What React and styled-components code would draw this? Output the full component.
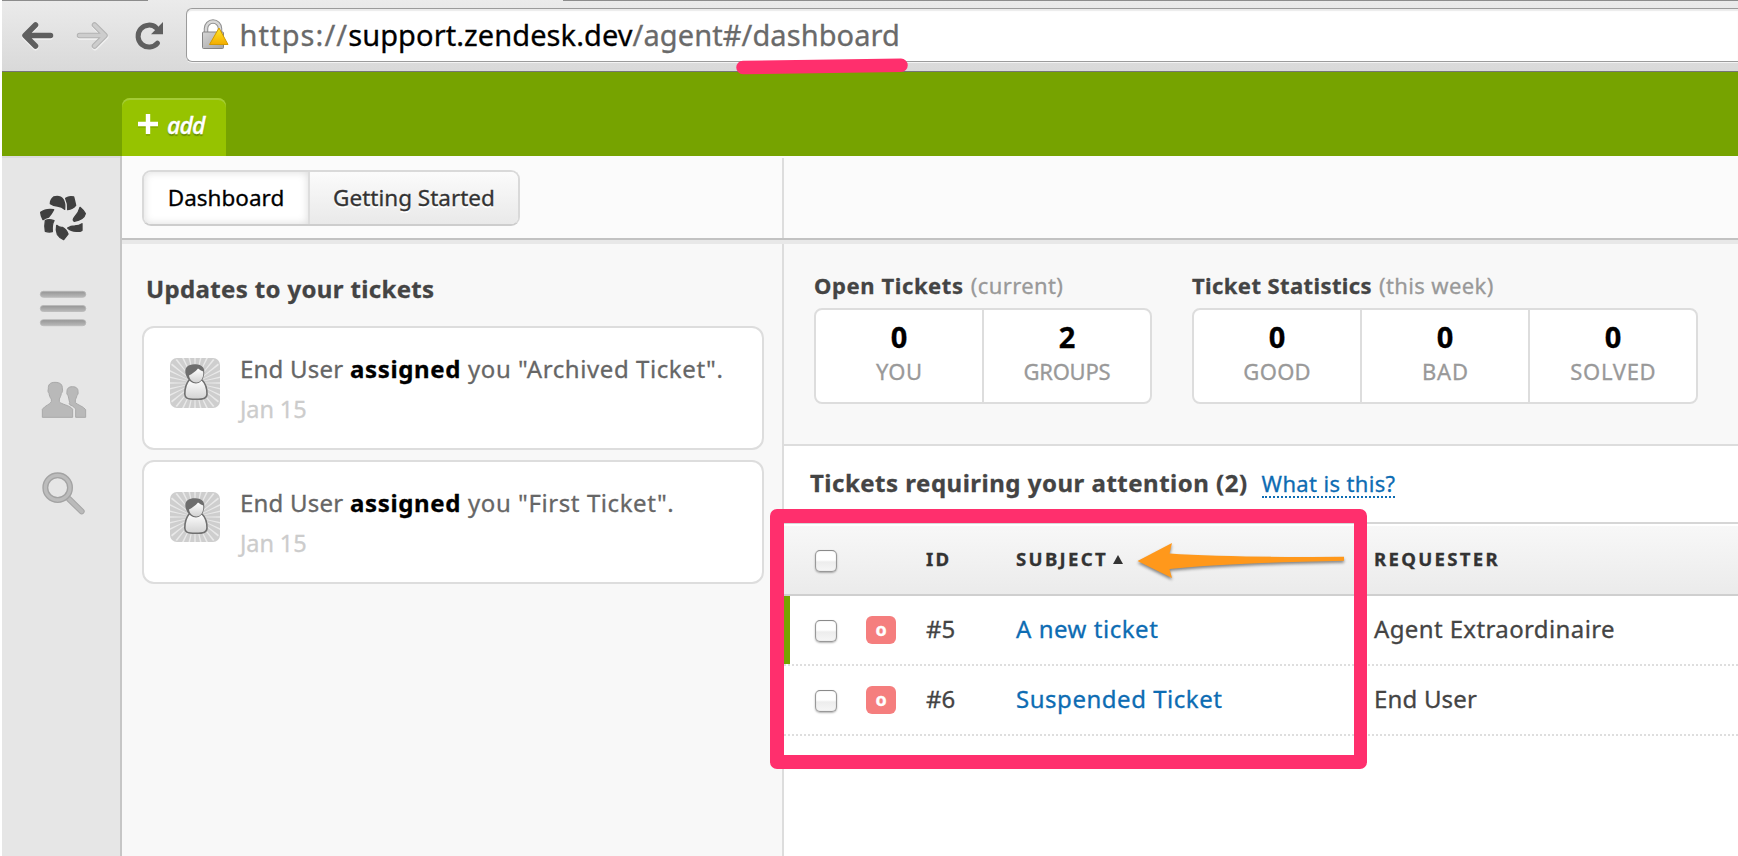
import React from 'react';
import styled, { createGlobalStyle, css } from 'styled-components';

const GlobalStyle = createGlobalStyle`
  *, *::before, *::after { box-sizing: border-box; }
  body {
    margin: 0;
    background: #fff;
    font-family: 'Noto Sans', 'Open Sans', sans-serif;
    -webkit-text-stroke: 0.3px;
    overflow: hidden;
  }
`;

const line = '#dddddd';
const green = '#76a300';
const pink = '#ff2f6d';

const Screen = styled.div`
  position: relative;
  display: flex;
  flex-direction: column;
  width: 1738px;
  height: 856px;
  padding-left: 2px;
  overflow: hidden;
  background: #fff;
`;

/* ---- browser chrome ---- */
const BrowserBar = styled.header`
  flex: none;
  display: flex;
  align-items: flex-start;
  height: 72px;
  padding: 8px 0 0 18px;
  border-bottom: 1px solid #757575;
  background: linear-gradient(#ebebeb, #d9d9d9);
`;

const TabEdges = styled.div`
  position: absolute;
  top: 0;
  left: 2px;
  right: 0;
  height: 1px;
  display: flex;
  justify-content: space-between;
  &::before { content: ''; width: 146px; background: #8c8c8c; }
  &::after { content: ''; width: 1175px; background: #8c8c8c; }
`;

const NavButtons = styled.nav`
  width: 166px;
  padding-top: 12px;
  svg { display: block; }
`;

const AddressBar = styled.div`
  flex: 1;
  display: flex;
  align-items: center;
  height: 54px;
  padding-left: 14px;
  border: 1px solid #9b9b9b;
  border-right: 0;
  border-radius: 6px 0 0 6px;
  background: #fff;
  box-shadow: inset 0 2px 1px #ececec, 0 1px 0 #f4f4f4;
`;

const Url = styled.div`
  margin-left: 10.5px;
  font-size: 29px;
  line-height: 40px;
  letter-spacing: 0.08px;
  color: #6a6a6a;
  white-space: pre;
`;
const UrlScheme = styled.span`letter-spacing: 1.1px;`;
const UrlHost = styled.span`color: #000; letter-spacing: 0.08px;`;

/* ---- green application bar ---- */
const AppBar = styled.div`
  flex: none;
  display: flex;
  align-items: flex-end;
  height: 84px;
  padding-left: 120px;
  background: ${green};
`;

const AddTab = styled.button`
  display: flex;
  align-items: center;
  width: 104px;
  height: 58px;
  padding: 0 0 4px 16px;
  border: 0;
  border-radius: 8px 8px 0 0;
  background: #96c300;
  box-shadow: inset 0 2px 0 #a4cc35;
  color: #fff;
  font: italic 600 23px/28px 'Open Sans', sans-serif;
  letter-spacing: -0.9px;
  text-shadow: 0 2px 1px rgba(60, 90, 0, 0.5);
  svg { display: block; margin-right: 9px; }
`;

/* ---- frame ---- */
const Frame = styled.div`
  flex: 1;
  display: flex;
  min-height: 0;
`;

const Sidebar = styled.aside`
  flex: none;
  width: 120px;
  padding: 38px 0 0 36px;
  border-right: 2px solid #c6c6c6;
  background: #e6e6e6;
  box-shadow: inset 0 2px 0 #dcdcdc;
`;

const SideIcon = styled.div`
  height: ${(p) => p.$slot}px;
  margin-left: ${(p) => p.$shift || 0}px;
  svg { display: block; }
`;

const Content = styled.main`
  flex: 1;
  display: flex;
  flex-direction: column;
  min-width: 0;
`;

const TopStrip = styled.div`
  flex: none;
  display: flex;
  height: 84px;
  padding-top: 2px;
  border-bottom: 2px solid #c2c2c2;
  background: #fbfbfb;
`;

const StripLeft = styled.div`
  width: 662px;
  padding: 12px 0 0 20px;
  border-right: 2px solid ${line};
`;

const Segmented = styled.div`
  display: flex;
  width: 378px;
  height: 56px;
  border: 2px solid #d9d9d9;
  border-bottom-color: #cdcdcd;
  border-radius: 9px;
  overflow: hidden;
`;

const Segment = styled.button`
  width: ${(p) => p.$width}px;
  padding: 0 0 1px;
  border: 0;
  font: 400 22.5px/28px 'Noto Sans', sans-serif;
  ${(p) => p.$active ? css`
    color: #000;
    background: #fff;
    border-right: 2px solid ${line};
    box-shadow: inset 0 0 8px rgba(0, 0, 0, 0.15);
  ` : css`
    color: #333;
    background: linear-gradient(#fbfbfb, #e9e9e9);
    text-shadow: 0 2px 0 #fff;
  `}
`;

const Columns = styled.div`
  flex: 1;
  display: flex;
  min-height: 0;
  border-top: 4px solid #e8e8e8;
`;

/* ---- updates column ---- */
const Updates = styled.section`
  flex: none;
  width: 662px;
  padding: 31px 18px 0 20px;
  border-right: 2px solid ${line};
  background: #f8f8f8;
`;

const UpdatesTitle = styled.h2`
  margin: 0 0 23px 4px;
  font-size: 24px;
  line-height: 28px;
  letter-spacing: 0.35px;
  color: #444;
`;

const Card = styled.article`
  display: flex;
  height: 124px;
  margin-bottom: 10px;
  padding: 0 0 0 26px;
  border: 2px solid ${line};
  border-radius: 12px;
  background: #fff;
  svg { display: block; margin-top: 30px; }
`;

const CardText = styled.div`
  margin: 27px 0 0 20px;
  font-size: 24px;
  line-height: 28px;
  letter-spacing: 0.58px;
  color: #666;
  white-space: nowrap;
  b { color: #000; letter-spacing: 0.64px; }
`;
const Who = styled.span`letter-spacing: 0.2px;`;

const CardDate = styled.div`
  margin-top: 12px;
  font-size: 23.5px;
  letter-spacing: -0.1px;
  color: #ccc;
`;

/* ---- ticket column ---- */
const Tickets = styled.section`
  flex: 1;
  min-width: 0;
  background: #fff;
`;

const Stats = styled.div`
  display: flex;
  gap: 40px;
  height: 202px;
  padding: 27px 0 0 30px;
  border-bottom: 2px solid ${line};
  background: #f8f8f8;
`;

const StatTitle = styled.h3`
  height: 37px;
  margin: 0;
  font-size: 22px;
  line-height: 28px;
  letter-spacing: ${(p) => p.$track}px;
  color: #444;
  white-space: pre;
  span { font-weight: 400; margin-left: 0.8px; letter-spacing: 0.38px; color: #999; }
`;

const StatBox = styled.div`
  display: flex;
  height: 96px;
  border: 2px solid ${line};
  border-radius: 8px;
  background: #fff;
`;

const Stat = styled.div`
  display: flex;
  flex-direction: column;
  align-items: center;
  width: 168px;
  padding-top: 11px;
  & + & { border-left: 2px solid ${line}; }
  &:first-child { width: 166px; }
`;
const StatValue = styled.strong`
  font-size: 29px;
  line-height: 32px;
  color: #000;
`;
const StatLabel = styled.span`
  margin-top: 4px;
  font-size: 22px;
  line-height: 28px;
  letter-spacing: ${(p) => p.$track}px;
  margin-right: ${(p) => -p.$track}px;
  color: #999;
`;

const Attention = styled.div`
  display: flex;
  align-items: baseline;
  height: 76px;
  padding: 23px 0 0 26px;
`;
const AttentionTitle = styled.h2`
  margin: 0;
  font-size: 24px;
  line-height: 28px;
  letter-spacing: 0.5px;
  color: #444;
`;
const HelpLink = styled.a`
  margin-left: 14px;
  border-bottom: 2px dotted #0d6cb3;
  font-size: 22px;
  line-height: 25px;
  letter-spacing: 0.35px;
  color: #0d6cb3;
`;

const rowGrid = css`
  display: grid;
  grid-template-columns: 51px 60px 90px 358px 1fr;
  align-items: center;
  padding-left: 31px;
`;

const HeadRow = styled.div`
  ${rowGrid}
  height: 74px;
  border-top: 2px solid #d6d6d6;
  border-bottom: 2px solid #cfcfcf;
  background: linear-gradient(#f8f8f8, #ebebeb);
  box-shadow: inset 0 2px 0 #fff;
  font-size: 18.6px;
  font-weight: 700;
  line-height: 24px;
  letter-spacing: 2.3px;
  color: #333;
`;
const SortHead = styled.div`
  display: flex;
  align-items: center;
  svg { margin-left: 5px; }
`;

const Row = styled.div`
  ${rowGrid}
  height: 70px;
  border-bottom: 2px dotted #dedede;
  box-shadow: ${(p) => (p.$current ? `inset 6px 0 0 ${green}` : 'none')};
  font-size: 24px;
  line-height: 28px;
  color: #444;
`;
const Cell = styled.div`
  margin-top: -2px;
  letter-spacing: ${(p) => p.$track || 0}px;
`;
const Subject = styled.a`
  margin-top: -2px;
  letter-spacing: 0.53px;
  color: #0d6cb3;
`;

const Check = styled.span`
  width: 22px;
  height: 22px;
  margin-top: ${(p) => p.$drop}px;
  border: 1.5px solid #999;
  border-top-color: #8a8a8a;
  border-radius: 5px;
  background: linear-gradient(#fff 0 45%, #ededed 55%, #f6f6f6);
  box-shadow: 0 1px 2px rgba(0, 0, 0, 0.3), inset 0 0 1px #aaa;
`;

const Badge = styled.span`
  display: flex;
  justify-content: center;
  width: 30px;
  height: 28px;
  border-radius: 6px;
  background: #f57e7e;
  color: #fff;
  font-size: 18px;
  font-weight: 700;
  line-height: 27px;
`;

/* ---- annotations drawn over the page ---- */
const Highlight = styled.div`
  position: absolute;
  left: 770px;
  top: 509px;
  width: 597px;
  height: 260px;
  border: 14px solid ${pink};
  border-right-width: 13px;
  border-radius: 7px;
`;
const Pointer = styled.svg`
  position: absolute;
  left: 1129px;
  top: 536px;
  filter: drop-shadow(0 2px 1.5px rgba(0, 0, 0, 0.45));
`;
const Underline = styled.svg`
  position: absolute;
  left: 730px;
  top: 52px;
`;

const NavIcons = () => (
  <svg width="146" height="32" viewBox="20 20 146 32" fill="none" strokeLinecap="round" strokeLinejoin="round">
    <g stroke="#fff" strokeOpacity="0.5" strokeWidth="6" transform="translate(0 1.5)">
      <path d="M35.5 25 25 35.5 35.5 46M26 35.5H50" />
      <path d="M95 25 105.500 35.500 95 46M80 35.500H104" />
    </g>
    <path d="M35.500 25 25 35.500 35.500 46M26 35.500H50.500" stroke="#5f5f5f" strokeWidth="5.500" />
    <path d="M94.500 25 105 35.500 94.500 46M79.500 35.500H104" stroke="#b3b3b3" strokeWidth="5.500" />
    <path d="M94.500 25 105 35.500 94.500 46M79.500 35.500H104" stroke="#cdcdcd" strokeWidth="3.500" />
    <path d="M157.500 43.200A11 11 0 1 1 156.300 27.800" stroke="#5f5f5f" strokeWidth="5" />
    <path d="M163 22V34.300H151Z" fill="#5f5f5f" />
  </svg>
);

const LockIcon = () => (
  <svg width="28" height="32" viewBox="201 20 28 32">
    <defs>
      <linearGradient id="lock" x1="0" x2="1" y2="1"><stop stopColor="#d6d6d6" /><stop offset="1" stopColor="#a4a4a4" /></linearGradient>
      <linearGradient id="warn" x2="0" y2="1"><stop stopColor="#ffe92a" /><stop offset="1" stopColor="#f3ac00" /></linearGradient>
    </defs>
    <path d="M206 34V29.500a7 7 0 0 1 14 0V34" fill="none" stroke="#8f8f8f" strokeWidth="4.500" />
    <path d="M206 34V29.500a7 7 0 0 1 14 0V34" fill="none" stroke="#d8d8d8" strokeWidth="2.500" />
    <rect x="202.500" y="33" width="21" height="16.500" rx="1" fill="url(#lock)" stroke="#858585" />
    <path d="M219 29 228 45.500H209.500Z" fill="url(#warn)" stroke="#d39a00" strokeLinejoin="round" />
  </svg>
);

const PlusIcon = () => (
  <svg width="20" height="22" viewBox="0 0 20 22">
    <path d="M10 2V22M0 12H20" stroke="#6d9100" strokeOpacity="0.4" strokeWidth="4" />
    <path d="M10 0V20M0 10H20" stroke="#fff" strokeWidth="4.400" />
  </svg>
);

const LogoIcon = () => (
  <svg width="50" height="48" viewBox="114 101 150 144" fill="#404040" stroke="#404040" strokeWidth="4" strokeLinejoin="round">
    <path d="M151 130Q151 118 161 110Q180 105 189 117Q196 128 194 147Q186 138 172 137Q160 136 151 130Z" />
    <path d="M197 114Q208 106 221 110Q224 122 227 135Q219 146 203 148Q205 130 197 114Z" />
    <path d="M240 141Q250 149 256 160Q252 178 223 183Q216 180 224 170Q236 158 240 141Z" />
    <path d="M246 190V210Q240 214 229 213Q212 212 203 203Q212 197 224 197Q238 196 246 190Z" />
    <path d="M170 195Q178 202 187 201Q199 207 204 221L191 238Q178 232 172 222Q167 208 170 195Z" />
    <path d="M136 181Q146 175 162 181Q155 192 157 214Q147 217 136 213Q133 196 136 181Z" />
    <path d="M122 156Q138 144 161 148Q155 160 146 170Q136 172 129 178Q123 168 122 156Z" />
  </svg>
);

const MenuIcon = () => (
  <svg width="50" height="40" viewBox="0 0 50 40">
    <defs>
      <linearGradient id="bar" x2="0" y2="1"><stop stopColor="#959595" /><stop offset="1" stopColor="#b9b9b9" /></linearGradient>
    </defs>
    {[1.3, 15.5, 29.7].map((y) => (
      <rect key={y} x="2.300" y={y} width="45.500" height="6" rx="3" fill="url(#bar)" stroke="#b8b8b8" strokeWidth="0.800" />
    ))}
  </svg>
);

const PeopleIcon = () => (
  <svg width="56" height="44" viewBox="0 6 168 132" fill="#b9b9b9" stroke="#a9a9a9" strokeWidth="3" strokeLinejoin="round">
    <path d="M57 19C73 19 80 26 79 39C81 44 79 49 76 52C75 60 72 65 70 69V77C76 86 102 87 110 100V124H19V100C27 88 42 86 46 77V69C42 65 40 59 39 52C36 49 35 44 37 39C36 26 42 19 57 19Z" />
    <path d="M109 32C121 32 127 38 126 48C127 52 126 56 123 58C121 66 119 69 118 72V80C127 88 142 91 149 101V124H119V101C118 96 112 91 105 88C101 86 98 84 101 80C100 72 97 65 96 58C92 56 92 51 93 48C92 38 98 32 109 32Z" />
  </svg>
);

const SearchIcon = () => (
  <svg width="56" height="48" viewBox="0 283 168 144" fill="none" strokeLinecap="round">
    <path d="M99 367 137 404" stroke="#a6a6a6" strokeWidth="18" />
    <path d="M99 367 137 404" stroke="#bababa" strokeWidth="12" />
    <circle cx="65" cy="333" r="37" stroke="#a3a3a3" strokeWidth="18" />
    <circle cx="65" cy="333" r="37" stroke="#bcbcbc" strokeWidth="10" />
  </svg>
);

const Avatar = () => (
  <svg width="50" height="50" viewBox="0 0 50 50">
    <defs>
      <linearGradient id="skin" x2="0" y2="1"><stop stopColor="#fff" /><stop offset="1" stopColor="#d2d2d2" /></linearGradient>
      <clipPath id="tile"><rect width="50" height="50" rx="7" /></clipPath>
    </defs>
    <g clipPath="url(#tile)">
      <rect width="50" height="50" fill="#cecece" />
      {Array.from({ length: 28 }, (_, i) => (
        <path key={i} d="M25 25 24.100 -5H25.900Z" fill="#e9e9e9" transform={`rotate(${i * 12.857} 25 25)`} />
      ))}
      <path d="M19.500 21.500C16.500 25 14.800 30 14.800 36C14.800 40 17 41.300 25.500 41.300S37 40 37 36C37 30 35.200 25 32 22Z" fill="url(#skin)" stroke="#707070" strokeWidth="1.600" />
      <path d="M16 17C13.500 10 18 6 25.500 6.300C32 6.500 35.500 10 34 17C33 22.500 29.500 25.500 26 25.500S17.500 22 16 17Z" fill="#6e6e6e" />
      <path d="M19 17.500C22 16 25.500 13.500 28 10.500C30 12 32 13 33.200 13.500C34 20 30.500 24.500 26.500 24.500C22.500 24.500 19.500 21.500 19 17.500Z" fill="url(#skin)" />
    </g>
  </svg>
);

const updates = ['Archived Ticket', 'First Ticket'];
const tickets = [
  { id: '#5', subject: 'A new ticket', requester: 'Agent Extraordinaire', current: true, track: 0.38 },
  { id: '#6', subject: 'Suspended Ticket', requester: 'End User', track: 0.18 },
];
const openStats = [
  { value: 0, label: 'YOU', track: 0.4 },
  { value: 2, label: 'GROUPS', track: -0.25 },
];
const weekStats = [
  { value: 0, label: 'GOOD', track: 0.3 },
  { value: 0, label: 'BAD', track: 0.8 },
  { value: 0, label: 'SOLVED', track: 0.7 },
];

const StatGroup = ({ title, note, track, items }) => (
  <div>
    <StatTitle $track={track}>{title} <span>{note}</span></StatTitle>
    <StatBox>
      {items.map((s) => (
        <Stat key={s.label}>
          <StatValue>{s.value}</StatValue>
          <StatLabel $track={s.track}>{s.label}</StatLabel>
        </Stat>
      ))}
    </StatBox>
  </div>
);

export default function App() {
  return (
    <>
      <GlobalStyle />
      <Screen>
        <BrowserBar>
          <NavButtons><NavIcons /></NavButtons>
          <AddressBar>
            <LockIcon />
            <Url><UrlScheme>https://</UrlScheme><UrlHost>support.zendesk.dev</UrlHost>/agent#/dashboard</Url>
          </AddressBar>
        </BrowserBar>
        <TabEdges />
        <AppBar>
          <AddTab><PlusIcon />add</AddTab>
        </AppBar>
        <Frame>
          <Sidebar>
            <SideIcon $slot={96}><LogoIcon /></SideIcon>
            <SideIcon $slot={88}><MenuIcon /></SideIcon>
            <SideIcon $slot={93} $shift={-2}><PeopleIcon /></SideIcon>
            <SideIcon $slot={48} $shift={-2}><SearchIcon /></SideIcon>
          </Sidebar>
          <Content>
            <TopStrip>
              <StripLeft>
                <Segmented>
                  <Segment $active $width={166}>Dashboard</Segment>
                  <Segment $width={208}>Getting Started</Segment>
                </Segmented>
              </StripLeft>
            </TopStrip>
            <Columns>
              <Updates>
                <UpdatesTitle>Updates to your tickets</UpdatesTitle>
                {updates.map((name) => (
                  <Card key={name}>
                    <Avatar />
                    <CardText>
                      <Who>End User</Who> <b>assigned</b> you "{name}".
                      <CardDate>Jan 15</CardDate>
                    </CardText>
                  </Card>
                ))}
              </Updates>
              <Tickets>
                <Stats>
                  <StatGroup title="Open Tickets" note="(current)" track={0.6} items={openStats} />
                  <StatGroup title="Ticket Statistics" note="(this week)" track={0.4} items={weekStats} />
                </Stats>
                <Attention>
                  <AttentionTitle>Tickets requiring your attention (2)</AttentionTitle>
                  <HelpLink>What is this?</HelpLink>
                </Attention>
                <HeadRow>
                  <Check $drop={4} />
                  <span />
                  <span>ID</span>
                  <SortHead>
                    SUBJECT
                    <svg width="10" height="9" viewBox="0 0 10 9"><path d="M5 0 10 9H0Z" fill="#333" /></svg>
                  </SortHead>
                  <span>REQUESTER</span>
                </HeadRow>
                {tickets.map((t) => (
                  <Row key={t.id} $current={t.current}>
                    <Check $drop={2} />
                    <Badge>o</Badge>
                    <Cell>{t.id}</Cell>
                    <Subject>{t.subject}</Subject>
                    <Cell $track={t.track}>{t.requester}</Cell>
                  </Row>
                ))}
              </Tickets>
            </Columns>
          </Content>
        </Frame>
        <Highlight />
        <Pointer width="220" height="50" viewBox="1130 536 220 50">
          <path d="M1138.500 561 1173 543 1170.500 553.500Q1230 557.500 1345 556.800V560.800Q1230 563 1170.500 569L1173 578Z" fill="#ff981b" />
        </Pointer>
        <Underline width="186" height="28" viewBox="730 52 186 28">
          <path d="M743 67.500 901 65.300" stroke={pink} strokeWidth="13.500" strokeLinecap="round" />
        </Underline>
      </Screen>
    </>
  );
}
